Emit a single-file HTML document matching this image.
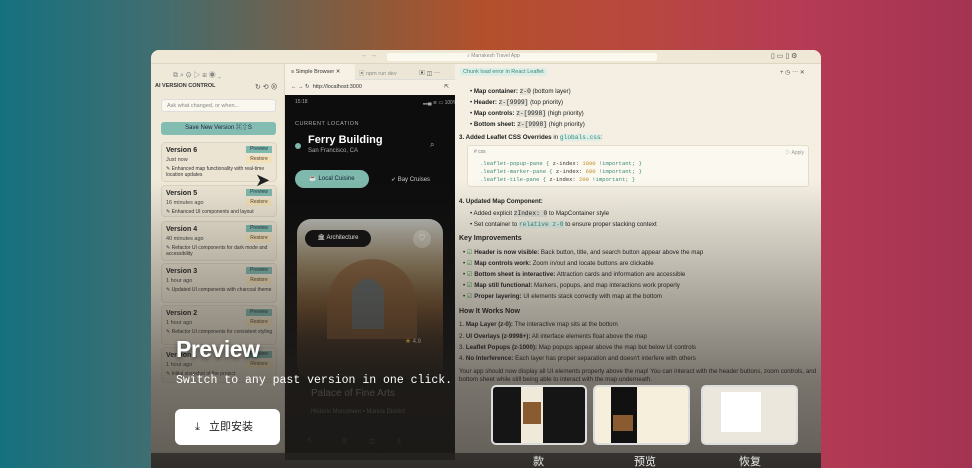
<!DOCTYPE html>
<html><head><meta charset="utf-8"><style>
*{margin:0;padding:0;box-sizing:border-box}
html{width:972px;height:468px;overflow:hidden}
body{width:972px;height:468px;overflow:hidden;position:relative;font-family:"Liberation Sans","Noto Sans CJK SC",sans-serif;background:linear-gradient(90deg,#15717f 0%,#3d6e72 15%,#8c5a3a 38%,#b4502c 50%,#b8483e 65%,#b63b55 82%,#a33352 100%)}
.win{position:absolute;z-index:1;left:151px;top:50px;width:670px;height:418px;border-radius:8px 8px 0 0;overflow:hidden;background:#f1ecdd}
.top{position:absolute;left:0;top:0;width:670px;height:14px;background:#efe8d6;border-bottom:1px solid #ddd5c2}
.side{position:absolute;left:0;top:14px;width:134px;height:404px;background:#efe9da;border-right:1px solid #ddd5c2}
.t{position:absolute;white-space:nowrap;color:#333}
.card{position:absolute;left:10px;width:116px;background:#ebe4d3;border:1px solid #dcd4c1;border-radius:4px}
.card b{position:absolute;left:4px;top:4px;font-size:7px;color:#222}
.pv{position:absolute;right:4px;top:3px;width:26px;height:7px;background:#7fb8ac;font-size:5px;text-align:center;color:#234}
.rs{position:absolute;right:4px;top:13px;width:26px;height:7px;background:#f2e1b8;font-size:5px;text-align:center;color:#543}
.card i{position:absolute;left:4px;top:14px;font-size:5.5px;font-style:normal;color:#444}
.card s{position:absolute;left:4px;top:23px;font-size:5px;text-decoration:none;color:#333;width:108px;line-height:6px}
.br{position:absolute;left:134px;top:14px;width:170px;height:396px;background:#0d0d0d}
.chat{position:absolute;left:304px;top:14px;width:366px;height:404px;background:#f4efe2}
.c{position:absolute;font-size:6.2px;color:#222;white-space:nowrap}
.ishade{position:absolute;left:0;top:0;width:670px;height:418px;z-index:20;background:linear-gradient(180deg,rgba(0,0,0,0) 0px,rgba(0,0,0,0) 130px,rgba(40,35,30,.3) 230px,rgba(40,36,32,.6) 330px,rgba(35,32,28,.68) 400px,rgba(30,28,25,.8) 418px)}
.strip{position:absolute;left:0;top:403px;width:670px;height:15px;z-index:21;background:rgba(40,38,35,.75)}
.ov{position:absolute;z-index:6}
.th{position:absolute;z-index:6;top:385px;height:60px;border-radius:5px;border:2px solid #ddd;overflow:hidden}
.lab{position:absolute;z-index:6;top:453px;color:#eee;font-size:11px}
</style></head><body>
<div class="win">
 <div class="top"><div style="position:absolute;left:236px;top:3px;width:270px;height:8px;background:#fbf8ee;border-radius:2px;font-size:5px;color:#888;padding-left:80px">⌕ Marrakesh Travel App</div>
 <div class="t" style="left:210px;top:2px;font-size:7px;color:#999">← →</div>
 <div class="t" style="left:620px;top:2px;font-size:7px;color:#555">▯ ▭ ▯ ⚙</div></div>
 <div class="side">
  <div class="t" style="left:22px;top:6px;font-size:7px;color:#888">⧉ ⌕ ⚙ ▷ ⊞ ◉ ⌄</div>
  <div class="t" style="left:4px;top:19px;font-size:5.5px;font-weight:bold">AI VERSION CONTROL</div>
  <div class="t" style="left:104px;top:18px;font-size:7px;color:#555">↻ ⟲ ⊗</div>
  <div style="position:absolute;left:10px;top:35px;width:115px;height:13px;background:#faf7ee;border:1px solid #ddd;border-radius:3px;font-size:5.5px;color:#888;padding:3px 5px">Ask what changed, or when...</div>
  <div style="position:absolute;left:10px;top:58px;width:115px;height:13px;background:#83bdb1;border-radius:3px;font-size:6px;color:#224;text-align:center;line-height:13px">Save New Version ⌘⇧S</div>
  <div class="card" style="top:78px;height:40px"><b>Version 6</b><div class="pv">Preview</div><div class="rs">Restore</div><i>Just now</i><s>✎ Enhanced map functionality with real-time location updates</s></div>
  <div class="card" style="top:121px;height:32px"><b>Version 5</b><div class="pv">Preview</div><div class="rs">Restore</div><i>16 minutes ago</i><s>✎ Enhanced UI components and layout</s></div>
  <div class="card" style="top:157px;height:40px"><b>Version 4</b><div class="pv">Preview</div><div class="rs">Restore</div><i>40 minutes ago</i><s>✎ Refactor UI components for dark mode and accessibility</s></div>
  <div class="card" style="top:199px;height:40px"><b>Version 3</b><div class="pv">Preview</div><div class="rs">Restore</div><i>1 hour ago</i><s>✎ Updated UI components with charcoal theme</s></div>
  <div class="card" style="top:241px;height:40px"><b>Version 2</b><div class="pv">Preview</div><div class="rs">Restore</div><i>1 hour ago</i><s>✎ Refactor UI components for consistent styling</s></div>
  <div class="card" style="top:283px;height:36px"><b>Version 1</b><div class="pv">Preview</div><div class="rs">Restore</div><i>1 hour ago</i><s>✎ Initial snapshot of the project</s></div>
  <div class="t" style="left:104px;top:106px;font-size:18px;color:#222">➤</div>
 </div>
 <div class="br">
  <div style="position:absolute;left:0;top:0;width:170px;height:16px;background:#ece6d6;border-bottom:1px solid #ddd"><div style="position:absolute;left:0;top:0;width:70px;height:16px;background:#f6f1e4;font-size:5.5px;color:#333;padding:5px 6px">≡ Simple Browser ✕</div><div class="t" style="left:74px;top:5px;font-size:5.5px;color:#888">▣ npm run dev</div><div class="t" style="left:134px;top:4px;font-size:6px;color:#555">▣ ◫ ⋯</div></div>
  <div style="position:absolute;left:0;top:16px;width:170px;height:15px;background:#f4efe2;font-size:5.5px;color:#333;padding:4px 6px">← → ↻ &nbsp;http://localhost:3000<span style="float:right">⇱</span></div>
  <div class="t" style="left:10px;top:35px;font-size:5px;color:#aaa">15:18</div><div class="t" style="left:138px;top:35px;font-size:5px;color:#aaa">▂▄ ≋ ▭ 100%</div>
  <div class="t" style="left:10px;top:57px;font-size:5.5px;color:#aaa;letter-spacing:.5px">CURRENT LOCATION</div>
  <div style="position:absolute;left:10px;top:79px;width:6px;height:6px;border-radius:50%;background:#7fb8ac"></div>
  <div class="t" style="left:23px;top:70px;font-size:11px;font-weight:bold;color:#fff">Ferry Building</div>
  <div class="t" style="left:23px;top:84px;font-size:6px;color:#aaa">San Francisco, CA</div>
  <div class="t" style="left:145px;top:76px;font-size:8px;color:#aaa">⌕</div>
  <div style="position:absolute;left:10px;top:106px;width:74px;height:18px;border-radius:9px;background:#7fb8ac;font-size:6px;color:#123;text-align:center;line-height:18px">☕ Local Cuisine</div>
  <div class="t" style="left:106px;top:112px;font-size:6px;color:#ccc">➶ Bay Cruises</div>
  <div style="position:absolute;left:12px;top:155px;width:146px;height:160px;border-radius:14px;overflow:hidden;background:linear-gradient(180deg,#b8b9b4 0%,#8f7d5e 30%,#6b4a2a 55%,#3a2a1c 75%,#151210 100%)">
   <div style="position:absolute;left:30px;top:40px;width:90px;height:80px;border-radius:45px 45px 0 0;background:#7a5230;opacity:.7"></div>
   <div style="position:absolute;left:55px;top:60px;width:32px;height:50px;border-radius:16px 16px 0 0;background:#5d6262"></div>
  </div>
  <div style="position:absolute;left:20px;top:166px;width:66px;height:17px;border-radius:9px;background:#111;font-size:6px;color:#fff;text-align:center;line-height:17px">🏛 Architecture</div>
  <div style="position:absolute;left:128px;top:166px;width:18px;height:18px;border-radius:50%;background:rgba(255,255,255,.25);color:#fff;font-size:7px;text-align:center;line-height:18px">♡</div>
  <div class="t" style="left:120px;top:272px;font-size:6px;color:#ddd"><span style="color:#e8b830">★</span> 4.9</div>
  <div class="t" style="left:26px;top:324px;font-size:10px;color:#777">Palace of Fine Arts</div>
  <div class="t" style="left:26px;top:345px;font-size:6px;color:#666">Historic Monument • Marina District</div>
  <div class="t" style="left:22px;top:372px;font-size:6px;color:#555">↖ &nbsp;&nbsp;&nbsp;&nbsp;&nbsp;&nbsp;&nbsp;&nbsp;&nbsp;&nbsp;&nbsp;&nbsp;&nbsp;&nbsp;&nbsp;&nbsp;▥ &nbsp;&nbsp;&nbsp;&nbsp;&nbsp;&nbsp;&nbsp;&nbsp;&nbsp;&nbsp;&nbsp;&nbsp;◫ &nbsp;&nbsp;&nbsp;&nbsp;&nbsp;&nbsp;&nbsp;&nbsp;&nbsp;&nbsp;&nbsp;&nbsp;♙</div>
 </div>
 <div class="chat">
  <div style="position:absolute;left:5px;top:4px;background:#dceee6;font-size:5.5px;color:#3a8a7a;padding:1px 3px">Chunk load error in React Leaflet</div>
  <div class="t" style="left:325px;top:3px;font-size:6px;color:#555">+ ◷ ⋯ ✕</div>
  <div class="c" style="left:15px;top:24px">• <b>Map container:</b> <code style="background:#e3e0d6">z-0</code> (bottom layer)</div>
  <div class="c" style="left:15px;top:35px">• <b>Header:</b> <code style="background:#e3e0d6">z-[9999]</code> (top priority)</div>
  <div class="c" style="left:15px;top:46px">• <b>Map controls:</b> <code style="background:#e3e0d6">z-[9998]</code> (high priority)</div>
  <div class="c" style="left:15px;top:57px">• <b>Bottom sheet:</b> <code style="background:#e3e0d6">z-[9998]</code> (high priority)</div>
  <div class="c" style="left:4px;top:70px"><b>3. Added Leaflet CSS Overrides</b> in <code style="background:#dceee6;color:#3a8a7a">globals.css</code>:</div>
  <div style="position:absolute;left:12px;top:81px;width:342px;height:42px;background:#fbf8ef;border:1px solid #e3ddcc;border-radius:3px">
   <div class="c" style="left:6px;top:3px;color:#777;font-size:5px"># css</div><div class="c" style="right:4px;top:3px;color:#999;font-size:5px">▷ Apply</div>
   <div class="c" style="left:12px;top:14px;font-family:'Liberation Mono',monospace;font-size:5.5px;color:#3a8a7a;line-height:8px">.leaflet-popup-pane { <span style="color:#333">z-index:</span> <span style="color:#c08a2a">1000</span> !important; }<br>.leaflet-marker-pane { <span style="color:#333">z-index:</span> <span style="color:#c08a2a">600</span> !important; }<br>.leaflet-tile-pane { <span style="color:#333">z-index:</span> <span style="color:#c08a2a">200</span> !important; }</div>
  </div>
  <div class="c" style="left:4px;top:134px"><b>4. Updated Map Component:</b></div>
  <div class="c" style="left:15px;top:146px">• Added explicit <code style="background:#e3e0d6">zIndex: 0</code> to MapContainer style</div>
  <div class="c" style="left:15px;top:157px">• Set container to <code style="background:#dceee6;color:#3a8a7a">relative z-0</code> to ensure proper stacking context</div>
  <div class="c" style="left:4px;top:171px;font-size:7px"><b>Key Improvements</b></div>
  <div class="c" style="left:8px;top:185px">• <span style="color:#3a3">☑</span> <b>Header is now visible:</b> Back button, title, and search button appear above the map</div>
  <div class="c" style="left:8px;top:196px">• <span style="color:#3a3">☑</span> <b>Map controls work:</b> Zoom in/out and locate buttons are clickable</div>
  <div class="c" style="left:8px;top:207px">• <span style="color:#3a3">☑</span> <b>Bottom sheet is interactive:</b> Attraction cards and information are accessible</div>
  <div class="c" style="left:8px;top:218px">• <span style="color:#3a3">☑</span> <b>Map still functional:</b> Markers, popups, and map interactions work properly</div>
  <div class="c" style="left:8px;top:229px">• <span style="color:#3a3">☑</span> <b>Proper layering:</b> UI elements stack correctly with map at the bottom</div>
  <div class="c" style="left:4px;top:244px;font-size:7px"><b>How It Works Now</b></div>
  <div class="c" style="left:4px;top:257px">1. <b>Map Layer (z-0):</b> The interactive map sits at the bottom</div>
  <div class="c" style="left:4px;top:269px">2. <b>UI Overlays (z-9998+):</b> All interface elements float above the map</div>
  <div class="c" style="left:4px;top:280px">3. <b>Leaflet Popups (z-1000):</b> Map popups appear above the map but below UI controls</div>
  <div class="c" style="left:4px;top:291px">4. <b>No Interference:</b> Each layer has proper separation and doesn't interfere with others</div>
  <div class="c" style="left:4px;top:304px">Your app should now display all UI elements properly above the map! You can interact with the header buttons, zoom controls, and</div>
  <div class="c" style="left:4px;top:312px">bottom sheet while still being able to interact with the map underneath.</div>
 </div>
 <div class="ishade"></div>
 <div class="strip"></div>
</div>
<div class="t ov" style="left:176px;top:336px;font-size:23px;font-weight:bold;color:#fff;text-shadow:0 2px 4px rgba(0,0,0,.5);letter-spacing:-.5px">Preview</div>
<div class="t ov" style="left:176px;top:374px;font-size:11.5px;color:#fff;font-family:'Liberation Mono',monospace">Switch to any past version in one click.</div>
<div class="ov" style="left:175px;top:409px;width:105px;height:36px;background:#fff;border-radius:6px;font-size:11px;color:#222;line-height:36px;padding-left:20px">⤓ &nbsp;&nbsp;立即安装</div>
<div class="th" style="left:491px;width:96px;background:#151515"><div style="position:absolute;left:28px;top:0;width:22px;height:60px;background:#efe9d9"></div><div style="position:absolute;left:30px;top:15px;width:18px;height:22px;background:#8a5a30"></div></div>
<div class="th" style="left:593px;width:97px;background:#f5efdc"><div style="position:absolute;left:16px;top:0;width:26px;height:60px;background:#111"></div><div style="position:absolute;left:18px;top:28px;width:20px;height:16px;background:#8a5a30"></div></div>
<div class="th" style="left:701px;width:97px;background:#ece7dc"><div style="position:absolute;left:18px;top:5px;width:40px;height:40px;background:#fff"></div></div>
<div class="lab" style="left:533px">款</div>
<div class="lab" style="left:634px">预览</div>
<div class="lab" style="left:739px">恢复</div>
</body></html>
